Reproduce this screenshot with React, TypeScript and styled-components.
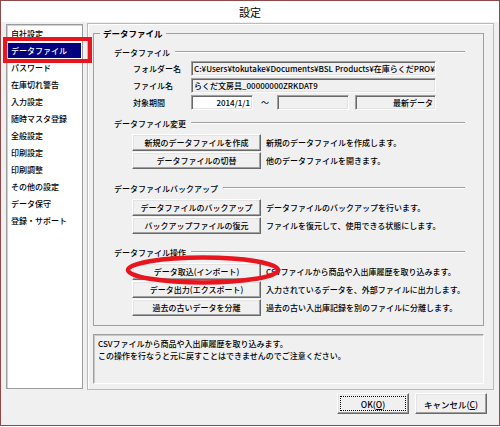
import React from 'react';
import styled, { createGlobalStyle } from 'styled-components';

const FONT = `"Noto Sans CJK JP", "Noto Sans CJK SC", "Noto Sans", sans-serif`;

const Global = createGlobalStyle`
  html, body { margin: 0; padding: 0; background: #fff; }
  body { width: 500px; height: 427px; overflow: hidden; font-family: ${FONT}; }
  * { box-sizing: border-box; }
`;

const Window = styled.div`
  position: relative;
  width: 500px;
  height: 426px;
  border: 1px solid #8e4a4a;
  background: #f0f0f0;
  display: flex;
  flex-direction: column;
  font-family: ${FONT};
  font-size: 8px;
  font-weight: 500;
  color: #000;
`;

const TitleBar = styled.div`
  height: 21px;
  background: #fff;
  display: flex;
  align-items: center;
  justify-content: center;
  font-size: 11px;
  font-weight: 400;
  color: #000;
`;

const Body = styled.div`
  display: flex;
  gap: 4px;
  padding: 1px 5px 0 5px;
  height: 368px;
`;

const List = styled.ul`
  list-style: none;
  margin: 1px 0 0 0;
  padding: 0 1px;
  width: 83px;
  height: 365px;
  background: #fff;
  border: 1px solid #9c9c9c;
  box-shadow: inset 1px 1px 0 #d0d0d0;
`;

const ListItem = styled.li`
  height: 17px;
  display: flex;
  align-items: center;
`;

const ItemLabel = styled.span<{ $selected?: boolean }>`
  flex: 1;
  height: 15px;
  line-height: 15px;
  padding-left: 3px;
  white-space: nowrap;
  background: ${(p) => (p.$selected ? '#000080' : 'transparent')};
  color: ${(p) => (p.$selected ? '#fff' : '#000')};
`;

const Panel = styled.div`
  flex: 1;
  height: 367px;
  border: 1px solid #b9b9b9;
  box-shadow: inset 1px 1px 0 #fff;
  padding: 2px 9px 0 5px;
  display: flex;
  flex-direction: column;
`;

const Group = styled.fieldset`
  margin: 0;
  padding: 5px 18px 8px 20px;
  border: 1px solid #a0a0a0;
  min-inline-size: 0;
`;

const GroupTitle = styled.legend`
  margin-left: -14px;
  padding: 0 3px;
  height: 14px;
  line-height: 14px;
  font-weight: bold;
  font-size: 8.5px;
`;

const Section = styled.div<{ $top: number }>`
  margin-top: ${(p) => p.$top}px;
  display: flex;
  flex-direction: column;
`;

const SectionHead = styled.div<{ $gap?: number }>`
  height: 14px;
  display: flex;
  align-items: center;
  gap: 5px;
  margin-bottom: ${(p) => p.$gap ?? 1}px;
  white-space: nowrap;
  &::after {
    content: '';
    flex: 1;
    height: 0;
    border-top: 1px solid #a0a0a0;
    border-bottom: 1px solid #fff;
  }
`;

const FieldRow = styled.div`
  height: 17px;
  display: flex;
  align-items: center;
  padding-left: 19px;
`;

const FieldLabel = styled.span`
  width: 58px;
  white-space: nowrap;
`;

const TextBox = styled.div<{ $w: number; $white?: boolean; $right?: boolean }>`
  width: ${(p) => p.$w}px;
  height: 15px;
  line-height: 13px;
  padding: 0 2px;
  background: ${(p) => (p.$white ? '#fff' : '#f0f0f0')};
  border: 1px solid;
  border-color: #a0a0a0 #fff #fff #a0a0a0;
  box-shadow: inset 1px 1px 0 #696969, inset -1px -1px 0 #e3e3e3;
  text-align: ${(p) => (p.$right ? 'right' : 'left')};
  white-space: nowrap;
  overflow: hidden;
`;

const Tilde = styled.span`
  width: 24px;
  text-align: center;
`;

const Spacer = styled.span<{ $w: number }>`
  width: ${(p) => p.$w}px;
`;

const ActionRow = styled.div`
  height: 17px;
  margin-bottom: 1px;
  display: flex;
  align-items: center;
  gap: 5px;
  padding-left: 18px;
  white-space: nowrap;
`;

const Button = styled.button`
  width: 129px;
  height: 17px;
  padding: 0;
  margin: 0;
  font: inherit;
  color: #000;
  background: #f0f0f0;
  border: 1px solid;
  border-color: #fff #696969 #696969 #fff;
  box-shadow: inset -1px -1px 0 #a0a0a0, inset 1px 1px 0 #e3e3e3;
  display: flex;
  align-items: center;
  justify-content: center;
  white-space: nowrap;
`;

const InfoBox = styled.div`
  margin-top: 8px;
  height: 50px;
  padding: 3px 4px;
  line-height: 12px;
  border: 1px solid;
  border-color: #a0a0a0 #fff #fff #a0a0a0;
  box-shadow: inset 1px 1px 0 #c8c8c8;
`;

const Footer = styled.div`
  flex: 1;
  display: flex;
  justify-content: flex-end;
  align-items: flex-start;
  gap: 6px;
  padding: 3px 12px 0 0;
`;

const DialogButton = styled.button<{ $default?: boolean }>`
  width: 72px;
  height: 21px;
  margin: 0;
  padding: 0;
  font: inherit;
  font-size: 8.5px;
  color: #000;
  background: #f0f0f0;
  border: 1px solid;
  border-color: #fff #696969 #696969 #fff;
  box-shadow: inset -1px -1px 0 #a0a0a0, inset 1px 1px 0 #e3e3e3;
  display: flex;
  align-items: center;
  justify-content: center;
  outline: ${(p) => (p.$default ? '1px dotted #000' : 'none')};
  outline-offset: -4px;
  u { text-decoration: underline; }
`;

const RedBox = styled.div`
  position: absolute;
  left: 2px;
  top: 36px;
  width: 89px;
  height: 26px;
  border: 4px solid #e8141e;
  pointer-events: none;
`;

const RedMark = styled.svg`
  position: absolute;
  left: 120px;
  top: 250px;
  width: 165px;
  height: 40px;
  pointer-events: none;
`;

const menu = [
  '自社設定',
  'データファイル',
  'パスワード',
  '在庫切れ警告',
  '入力設定',
  '随時マスタ登録',
  '全般設定',
  '印刷設定',
  '印刷調整',
  'その他の設定',
  'データ保守',
  '登録・サポート',
];

type Action = { label: string; desc: string };

const sections: { title: string; top: number; actions: Action[] }[] = [
  {
    title: 'データファイル変更',
    top: 5,
    actions: [
      { label: '新規のデータファイルを作成', desc: '新規のデータファイルを作成します。' },
      { label: 'データファイルの切替', desc: '他のデータファイルを開きます。' },
    ],
  },
  {
    title: 'データファイルバックアップ',
    top: 11,
    actions: [
      { label: 'データファイルのバックアップ', desc: 'データファイルのバックアップを行います。' },
      { label: 'バックアップファイルの復元', desc: 'ファイルを復元して、使用できる状態にします。' },
    ],
  },
  {
    title: 'データファイル操作',
    top: 10,
    actions: [
      { label: 'データ取込(インポート)', desc: 'CSVファイルから商品や入出庫履歴を取り込みます。' },
      { label: 'データ出力(エクスポート)', desc: '入力されているデータを、外部ファイルに出力します。' },
      { label: '過去の古いデータを分離', desc: '過去の古い入出庫記録を別のファイルに分離します。' },
    ],
  },
];

export default function App() {
  return (
    <>
      <Global />
      <Window>
        <TitleBar>設定</TitleBar>
        <Body>
          <List>
            {menu.map((m, i) => (
              <ListItem key={m}>
                <ItemLabel $selected={i === 1}>{m}</ItemLabel>
              </ListItem>
            ))}
          </List>
          <Panel>
            <Group>
              <GroupTitle>データファイル</GroupTitle>
              <Section $top={0}>
                <SectionHead>データファイル</SectionHead>
                <FieldRow>
                  <FieldLabel>フォルダー名</FieldLabel>
                  <TextBox $w={245}>C:¥Users¥tokutake¥Documents¥BSL Products¥在庫らくだPRO¥</TextBox>
                </FieldRow>
                <FieldRow>
                  <FieldLabel>ファイル名</FieldLabel>
                  <TextBox $w={245}>らくだ文房具_00000000ZRKDAT9</TextBox>
                </FieldRow>
                <FieldRow>
                  <FieldLabel>対象期間</FieldLabel>
                  <TextBox $w={62} $white $right>
                    2014/1/1
                  </TextBox>
                  <Tilde>～</Tilde>
                  <TextBox $w={72} />
                  <Spacer $w={6} />
                  <TextBox $w={81} $right>
                    最新データ
                  </TextBox>
                </FieldRow>
              </Section>
              {sections.map((s) => (
                <Section key={s.title} $top={s.top}>
                  <SectionHead $gap={4}>{s.title}</SectionHead>
                  {s.actions.map((a) => (
                    <ActionRow key={a.label}>
                      <Button>{a.label}</Button>
                      <span>{a.desc}</span>
                    </ActionRow>
                  ))}
                </Section>
              ))}
            </Group>
            <InfoBox>
              CSVファイルから商品や入出庫履歴を取り込みます。
              <br />
              この操作を行なうと元に戻すことはできませんのでご注意ください。
            </InfoBox>
          </Panel>
        </Body>
        <Footer>
          <DialogButton $default>
            <span>
              OK(<u>O</u>)
            </span>
          </DialogButton>
          <DialogButton>
            <span>
              キャンセル(<u>C</u>)
            </span>
          </DialogButton>
        </Footer>
        <RedBox />
        <RedMark viewBox="0 0 165 40">
          <ellipse cx="82" cy="19" rx="75" ry="12.5" fill="none" stroke="#e8141e" strokeWidth="4.5" />
        </RedMark>
      </Window>
    </>
  );
}
